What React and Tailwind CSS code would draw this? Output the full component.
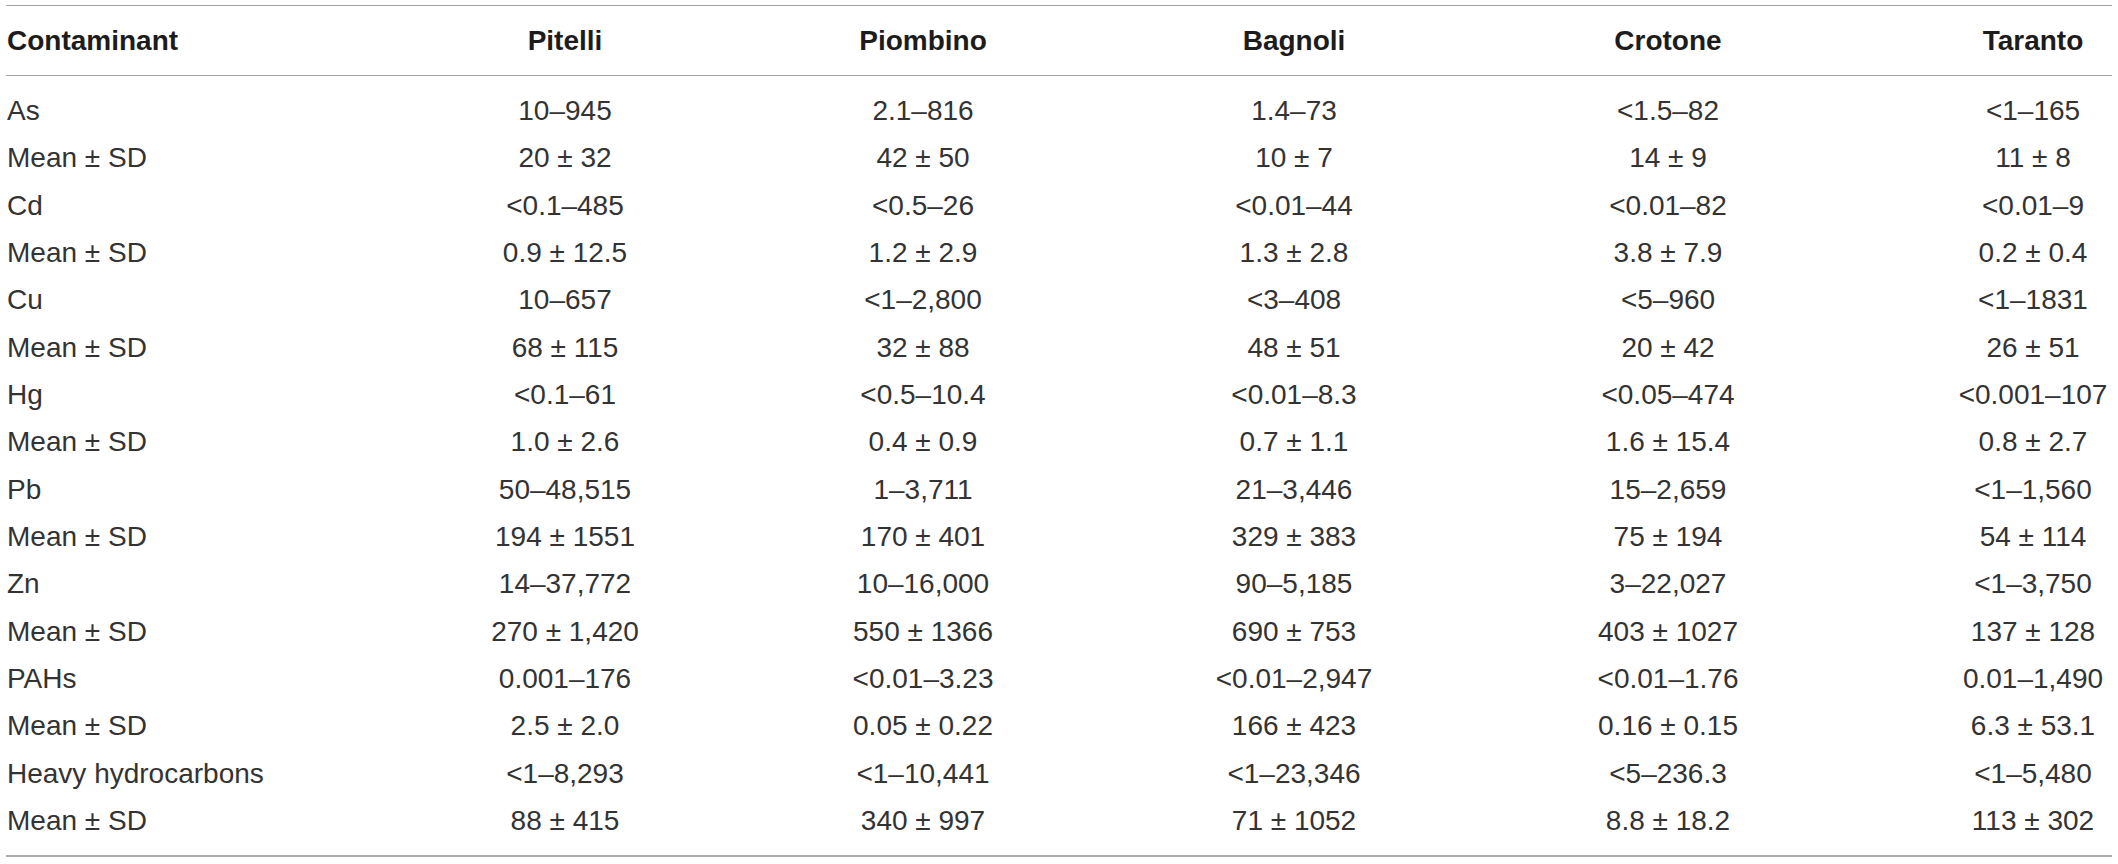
import React from 'react';

const sites = ['Pitelli', 'Piombino', 'Bagnoli', 'Crotone', 'Taranto'];

const rows = [
  ['As', '10–945', '2.1–816', '1.4–73', '<1.5–82', '<1–165'],
  ['Mean ± SD', '20 ± 32', '42 ± 50', '10 ± 7', '14 ± 9', '11 ± 8'],
  ['Cd', '<0.1–485', '<0.5–26', '<0.01–44', '<0.01–82', '<0.01–9'],
  ['Mean ± SD', '0.9 ± 12.5', '1.2 ± 2.9', '1.3 ± 2.8', '3.8 ± 7.9', '0.2 ± 0.4'],
  ['Cu', '10–657', '<1–2,800', '<3–408', '<5–960', '<1–1831'],
  ['Mean ± SD', '68 ± 115', '32 ± 88', '48 ± 51', '20 ± 42', '26 ± 51'],
  ['Hg', '<0.1–61', '<0.5–10.4', '<0.01–8.3', '<0.05–474', '<0.001–107'],
  ['Mean ± SD', '1.0 ± 2.6', '0.4 ± 0.9', '0.7 ± 1.1', '1.6 ± 15.4', '0.8 ± 2.7'],
  ['Pb', '50–48,515', '1–3,711', '21–3,446', '15–2,659', '<1–1,560'],
  ['Mean ± SD', '194 ± 1551', '170 ± 401', '329 ± 383', '75 ± 194', '54 ± 114'],
  ['Zn', '14–37,772', '10–16,000', '90–5,185', '3–22,027', '<1–3,750'],
  ['Mean ± SD', '270 ± 1,420', '550 ± 1366', '690 ± 753', '403 ± 1027', '137 ± 128'],
  ['PAHs', '0.001–176', '<0.01–3.23', '<0.01–2,947', '<0.01–1.76', '0.01–1,490'],
  ['Mean ± SD', '2.5 ± 2.0', '0.05 ± 0.22', '166 ± 423', '0.16 ± 0.15', '6.3 ± 53.1'],
  ['Heavy hydrocarbons', '<1–8,293', '<1–10,441', '<1–23,346', '<5–236.3', '<1–5,480'],
  ['Mean ± SD', '88 ± 415', '340 ± 997', '71 ± 1052', '8.8 ± 18.2', '113 ± 302'],
];

// column template shared by header and body rows
const cols = 'grid grid-cols-[380px_358px_358px_384px_364px_262px]';

// last column: content sits centred over the right-hand 158px
const cellClass = (i) => {
  if (i === 0) return 'text-left pl-px';
  if (i === 5) return 'text-center pl-[104px]';
  return 'text-center';
};

const App = () => {
  return (
    <div className="min-h-screen bg-white pt-[5px] px-[6px] font-['Liberation_Sans',Arial,sans-serif]">
      <div className="w-[2106px]">
        {/* Cabecera */}
        <div className={`${cols} h-[71px] items-center border-t border-b border-[#a3a3a3] text-[28px] font-bold text-[#1c1c1c]`}>
          <div className={cellClass(0)}>Contaminant</div>
          {sites.map((site, i) => (
            <div key={site} className={cellClass(i + 1)}>
              {site}
            </div>
          ))}
        </div>

        {/* Cuerpo */}
        <div className="pt-[11px] pb-[11px] border-b-2 border-[#ababab]">
          {rows.map((row, r) => (
            <div key={r} className={`${cols} h-[47.33px] leading-[47.33px] text-[28px] text-[#333333]`}>
              {row.map((value, i) => (
                <div key={i} className={`${cellClass(i)} whitespace-nowrap`}>
                  {value}
                </div>
              ))}
            </div>
          ))}
        </div>
      </div>
    </div>
  );
};

export default App;
